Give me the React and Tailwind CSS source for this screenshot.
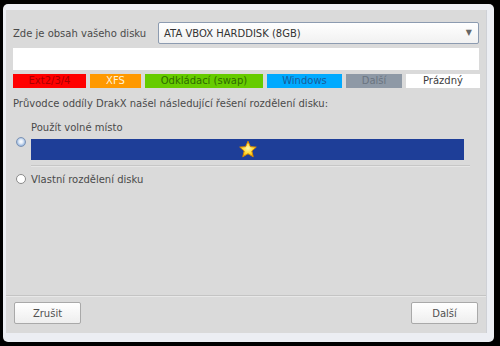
import React, { useState } from 'react';

const legend = [
  { label: 'Ext2/3/4', w: 'w-[73px]', cls: 'bg-[#ff0000] text-[#a80000]' },
  { label: 'XFS', w: 'w-[51px]', cls: 'bg-[#ff9900] text-[#fff2d8]' },
  { label: 'Odkládací (swap)', w: 'w-[118px]', cls: 'bg-[#66cc00] text-[#2e6a00]' },
  { label: 'Windows', w: 'w-[75px]', cls: 'bg-[#00aaff] text-[#1a5c9a]' },
  { label: 'Další', w: 'w-[56px]', cls: 'bg-[#8e99a6] text-[#6a7480]' },
  { label: 'Prázdný', w: 'w-[74px]', cls: 'bg-white text-[#3c3c3c]' },
];

const Radio = ({ checked }) =>
  checked ? (
    <span className="block w-[10px] h-[10px] rounded-full border border-[#7d93b4] bg-[radial-gradient(circle_at_50%_45%,#ffffff_0%,#dfe9f6_35%,#8fb0db_75%,#6d8fc0_100%)]" />
  ) : (
    <span className="block w-[10px] h-[10px] rounded-full border border-[#8a8a8a] bg-white" />
  );

const Star = () => (
  <svg width="20" height="19" viewBox="0 0 24 23">
    <defs>
      <radialGradient id="sg" cx="50%" cy="45%" r="60%">
        <stop offset="0%" stopColor="#fff7b0" />
        <stop offset="60%" stopColor="#ffd92a" />
        <stop offset="100%" stopColor="#f3a800" />
      </radialGradient>
    </defs>
    <path
      d="M12 1.5 L14.9 8.1 L22 8.6 L16.6 13.3 L18.3 20.3 L12 16.6 L5.7 20.3 L7.4 13.3 L2 8.6 L9.1 8.1 Z"
      fill="url(#sg)"
      stroke="#d98a00"
      strokeWidth="1.2"
      strokeLinejoin="round"
    />
  </svg>
);

const App = () => {
  const [choice, setChoice] = useState('free');

  return (
    <div className="w-[500px] h-[346px] bg-black pt-[4px] pl-[3px] font-['DejaVu_Sans',sans-serif] text-[10px] text-[#4a4a4a]">
      <div className="w-[491px] h-[338px] rounded-[5px] bg-[#eceef3] pt-[6px] pl-[3px] pr-[7px] pb-[9px]">
        <div className="h-full bg-[#dadada] flex flex-col border-r border-[#cfd1d6]">
          {/* Disk selector */}
          <div className="flex items-center mt-[12px] pl-[7px] pr-[7px] h-[22px]">
            <span className="w-[145px]">Zde je obsah vašeho disku</span>
            <div className="flex-1 h-[22px] flex items-center justify-between pl-[5px] pr-[6px] rounded-[2px] border border-[#8c9bb0] bg-gradient-to-b from-white to-[#f1f1f1] text-[#333]">
              <span>ATA VBOX HARDDISK (8GB)</span>
              <span className="text-[8px] text-[#666]">▼</span>
            </div>
          </div>

          <div className="mt-[4px] ml-[7px] mr-[7px] h-[22px] bg-white" />

          {/* Legend */}
          <div className="mt-[4px] ml-[7px] flex gap-[4px] h-[14px]">
            {legend.map((l) => (
              <div key={l.label} className={`${l.w} ${l.cls} flex items-center justify-center leading-none`}>
                {l.label}
              </div>
            ))}
          </div>

          <div className="mt-[9px] pl-[7px] leading-[14px]">
            Průvodce oddíly DrakX našel následující řešení rozdělení disku:
          </div>

          {/* Option 1 */}
          <div className="mt-[10px] flex pl-[10px]" onClick={() => setChoice('free')}>
            <div className="w-[15px] pt-[16px]">
              <Radio checked={choice === 'free'} />
            </div>
            <div className="flex flex-col">
              <span className="leading-[14px]">Použít volné místo</span>
              <div className="mt-[4px] w-[433px] h-[21px] bg-[#1e3e98] flex items-center justify-center">
                <Star />
              </div>
              <div className="mt-[5px] w-[439px] h-px bg-[#c6c6c6] border-b border-[#e6e6e6] box-content" />
            </div>
          </div>

          {/* Option 2 */}
          <div className="mt-[5px] flex items-center pl-[10px] h-[14px]" onClick={() => setChoice('custom')}>
            <div className="w-[15px]">
              <Radio checked={choice === 'custom'} />
            </div>
            <span>Vlastní rozdělení disku</span>
          </div>

          <div className="flex-1" />

          <div className="h-px bg-[#c4c4c4] border-b border-[#e8e8e8] box-content" />

          <div className="flex justify-between pl-[8px] pr-[8px] pt-[5px] pb-[9px]">
            <button className="w-[67px] h-[22px] rounded-[2px] border border-[#a9a9a9] bg-gradient-to-b from-white to-[#eeeeee] text-[#505050]">
              Zrušit
            </button>
            <button className="w-[67px] h-[22px] rounded-[2px] border border-[#a9a9a9] bg-gradient-to-b from-white to-[#eeeeee] text-[#505050]">
              Další
            </button>
          </div>
        </div>
      </div>
    </div>
  );
};

export default App;
